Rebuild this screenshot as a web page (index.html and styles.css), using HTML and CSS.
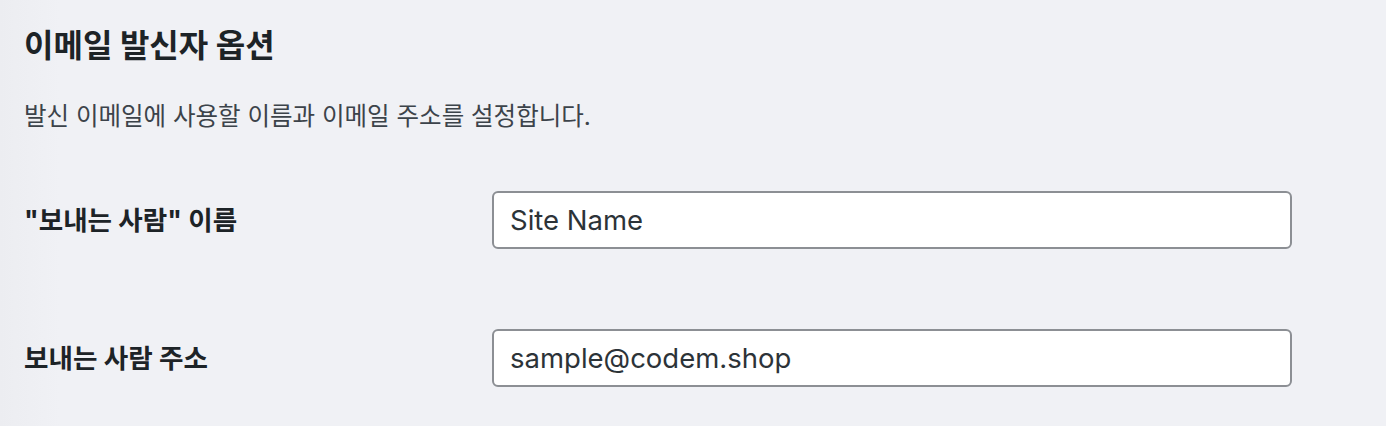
FILE: index.html
```html
<!DOCTYPE html>
<html lang="ko">
<head>
<meta charset="utf-8">
<title>이메일 발신자 옵션</title>
<link rel="stylesheet" href="styles.css">
</head>
<body>
<div class="wrap">
  <h2 class="title">이메일 발신자 옵션</h2>
  <p class="desc">발신 이메일에 사용할 이름과 이메일 주소를 설정합니다.</p>
  <div class="form">
    <div class="row">
      <label class="label" for="from-name">"보내는 사람" 이름</label>
      <input class="field" id="from-name" type="text" value="Site Name">
    </div>
    <div class="row">
      <label class="label" for="from-addr">보내는 사람 주소</label>
      <input class="field" id="from-addr" type="text" value="sample@codem.shop">
    </div>
  </div>
</div>
</body>
</html>
```

FILE: styles.css
```css
html, body {
  margin: 0;
  padding: 0;
}
body {
  background: #f0f1f5;
  color: #1d2327;
  font-family: "Inter", "Noto Sans CJK KR", sans-serif;
  width: 1386px;
  height: 426px;
  overflow: hidden;
}
.wrap {
  padding: 0 0 0 24px;
  background: linear-gradient(to right, #ecedf1 0, #f0f1f5 60px);
  height: 426px;
}
.title {
  margin: 0;
  padding-top: 26px;
  font-size: 32px;
  line-height: 40px;
  font-weight: 700;
}
.desc {
  margin: 0;
  padding-top: 33px;
  font-size: 24.5px;
  line-height: 34px;
  color: #3c434a;
}
.form {
  display: flex;
  flex-direction: column;
  gap: 80px;
  padding-top: 58px;
}
.row {
  display: grid;
  grid-template-columns: 468px 800px;
  align-items: center;
}
.label {
  font-size: 26.6px;
  font-weight: 700;
  line-height: 34px;
}
.field {
  box-sizing: border-box;
  height: 58px;
  width: 800px;
  border: 2px solid #8c8f94;
  border-radius: 6px;
  background: #fff;
  padding: 0 16px;
  font-family: "Inter", "Noto Sans CJK KR", sans-serif;
  font-size: 27.5px;
  color: #2c3338;
  outline: none;
}
```
